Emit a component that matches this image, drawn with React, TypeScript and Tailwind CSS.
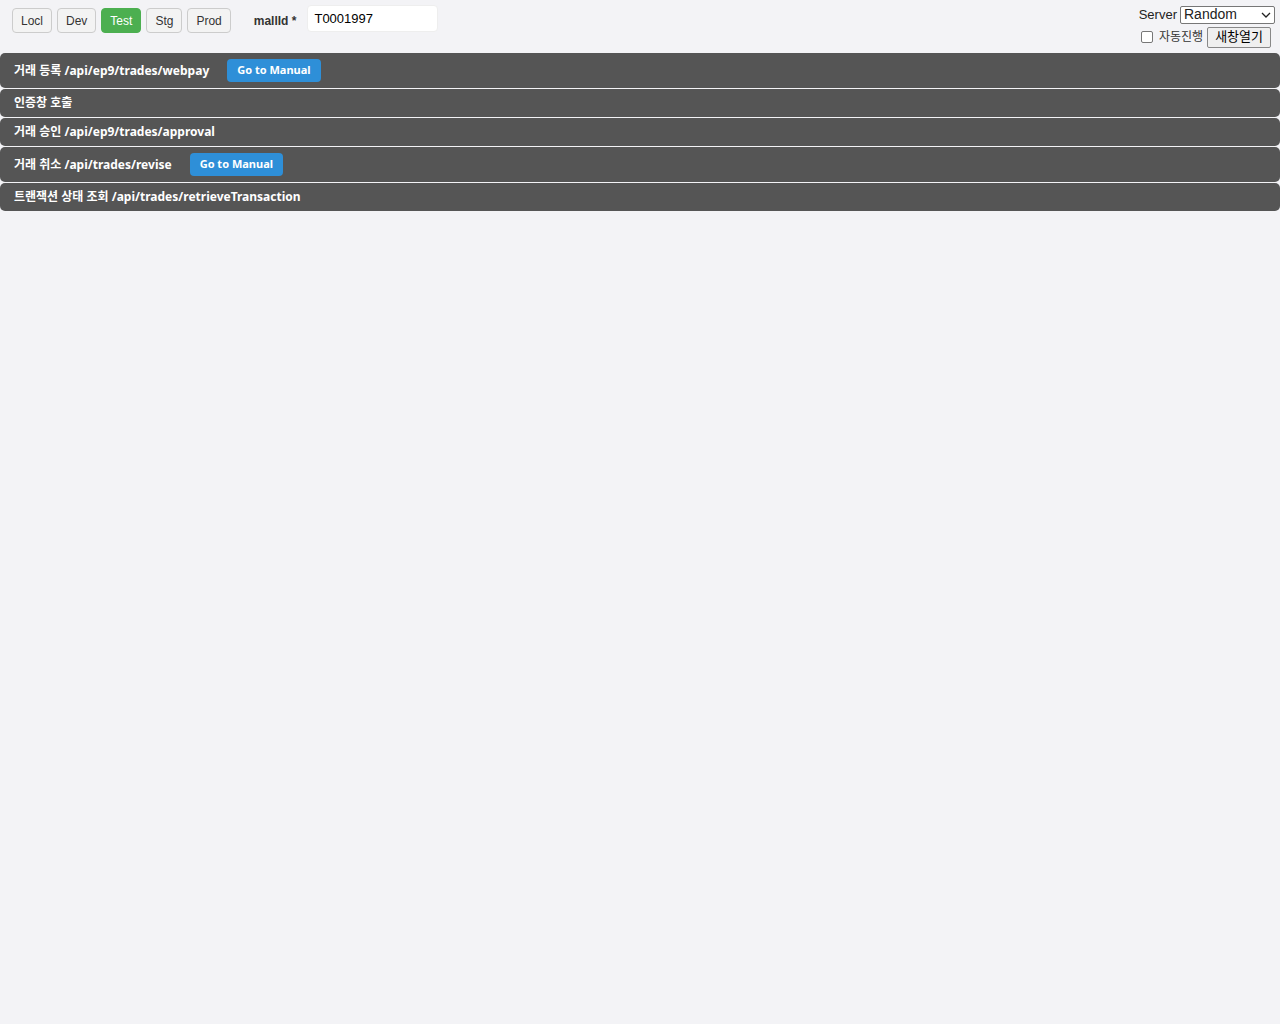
import React from "react";

const F = { fontFamily: '"Liberation Sans", Arial, "Noto Sans CJK KR", sans-serif' };
const B = { fontFamily: '"Noto Sans", "Noto Sans CJK KR", sans-serif' };

function Row({ title, manual, ml, h }: { title: string; manual?: boolean; ml?: string; h: string }) {
  return (
    <div className={`flex items-center bg-[#555555] rounded-[5px] px-[14px] ${h}`} style={B}>
      <span className="text-white text-[12px] font-bold">{title}</span>
      {manual && (
        <span className={`${ml} bg-[#2e8fd8] text-white text-[11px] font-bold rounded-[4px] px-[10px] h-[23px] flex items-center`}>Go to Manual</span>
      )}
    </div>
  );
}

export default function App() {
  const envs = ["Locl", "Dev", "Test", "Stg", "Prod"];
  return (
    <div className="min-h-[1024px] bg-[#f3f3f6]" style={F}>
      <div className="flex justify-between h-[53px]">
        <div className="flex items-start">
          <div className="flex gap-[5px] ml-[12px] mt-[8px]">
            {envs.map((e) => (
              <span
                key={e}
                className={`h-[25px] px-[8px] flex items-center text-[12px] rounded-[4px] border ${
                  e === "Test" ? "bg-[#4caf50] text-white border-[#4caf50]" : "bg-[#f3f3f3] text-[#333] border-[#ccc]"
                }`}
              >
                {e}
              </span>
            ))}
          </div>
          <span className="ml-[23px] mt-[12px] text-[12px] font-bold text-[#333]">mallId *</span>
          <div className="ml-[11px] mt-[5px] w-[131px] h-[27px] bg-white rounded-[4px] border border-[#eee] flex items-center px-[6px] text-[13px] text-black">T0001997</div>
        </div>
        <div className="flex flex-col items-end mr-[5px] mt-[5px] gap-[2px]">
          <div className="flex items-center gap-[3px] text-[13px] text-[#222]">
            <span>Server</span>
            <div className="w-[95px] h-[18px] border border-[#777] rounded-[2px] bg-white flex items-center justify-between px-[3px] text-[14px]">
              <span>Random</span>
              <svg width="10" height="6" viewBox="0 0 10 6"><path d="M1 1l4 4 4-4" stroke="#222" fill="none" strokeWidth="1.3" /></svg>
            </div>
          </div>
          <div className="flex items-center text-[12px] text-[#333] mr-[4px]">
            <span className="w-[12px] h-[12px] border border-[#777] rounded-[2px] bg-white mr-[6px]" />
            <span style={B}>자동진행</span>
            <span className="ml-[4px] h-[21px] px-[7px] border border-[#888] rounded-[2px] bg-[#efefef] text-[13px] text-black flex items-center" style={B}>새창열기</span>
          </div>
        </div>
      </div>
      <div className="flex flex-col gap-[1px]">
        <Row title="거래 등록 /api/ep9/trades/webpay" manual ml="ml-[18px]" h="h-[35px]" />
        <Row title="인증창 호출" h="h-[28px]" />
        <Row title="거래 승인 /api/ep9/trades/approval" h="h-[28px]" />
        <Row title="거래 취소 /api/trades/revise" manual ml="ml-[18px]" h="h-[35px]" />
        <Row title="트랜잭션 상태 조회 /api/trades/retrieveTransaction" h="h-[28px]" />
      </div>
    </div>
  );
}
